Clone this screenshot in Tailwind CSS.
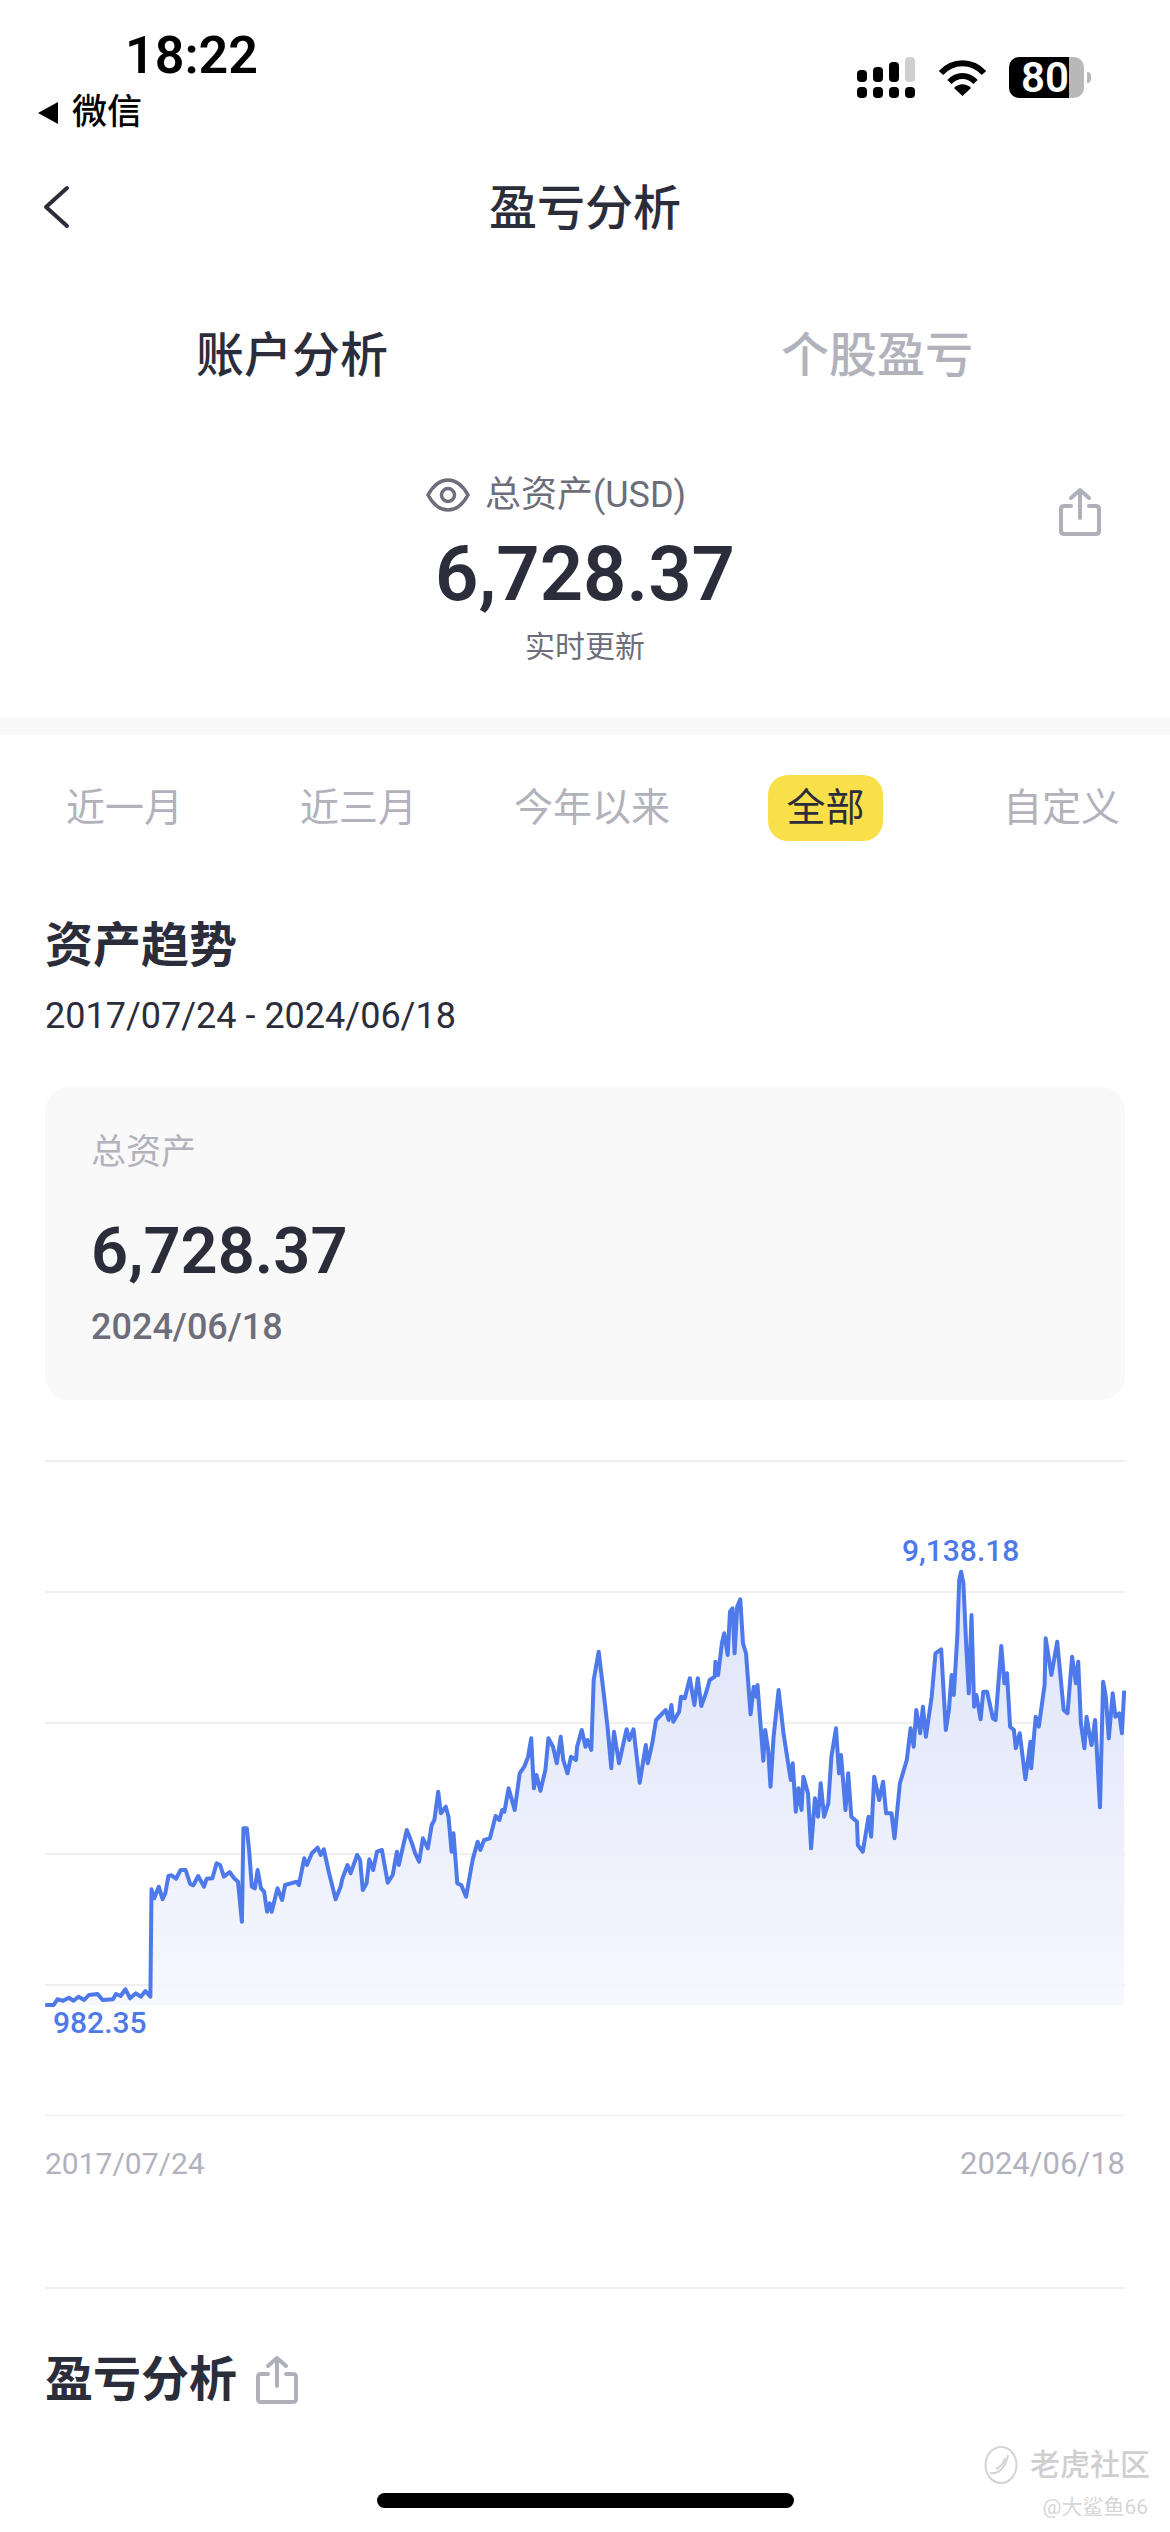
<!DOCTYPE html>
<html lang="zh-CN">
<head>
  <meta charset="UTF-8">
  <meta name="viewport" content="width=device-width, initial-scale=1.0">
  <title>盈亏分析</title>
  <script src="https://cdn.jsdelivr.net/npm/@tailwindcss/browser@4"></script>
</head>
<body class="bg-white text-[#2c2d3a] font-['Roboto','Noto_Sans_CJK_SC',sans-serif]">
<div class="relative w-[1170px] h-[2532px] overflow-hidden">

  <!-- Status bar -->
  <header class="h-[162px] flex justify-between text-black">
    <div class="pl-[37px]">
      <div class="pl-[88px] pt-[26px] h-[88px] text-[52px] leading-[60px] font-semibold">18:22</div>
      <div class="flex items-center gap-[14px] h-[50px] text-[35px] leading-[50px] font-medium">
        <svg width="21" height="24" viewBox="0 0 21 24"><path d="M21 1V23L1 12Z" fill="#000"/></svg>
        <span>微信</span>
      </div>
    </div>
    <div class="flex items-start pr-[79px] pt-[57px]">
      <svg width="131" height="42" viewBox="0 0 131 42">
        <g fill="#000">
          <rect x="0" y="13" width="10" height="12" rx="4"/>
          <rect x="16" y="10" width="10" height="15" rx="4"/>
          <rect x="32" y="5" width="10" height="20" rx="4"/>
          <rect x="0" y="30" width="10" height="11" rx="4"/>
          <rect x="16" y="30" width="10" height="11" rx="4"/>
          <rect x="32" y="30" width="10" height="11" rx="4"/>
          <rect x="48" y="30" width="10" height="11" rx="4"/>
        </g>
        <rect x="48" y="0" width="10" height="25" rx="4" fill="#cfcfcf"/>
        <g fill="none" stroke="#000" stroke-width="6">
          <path d="M84 16C96 3 115 3 127 16"/>
          <path d="M92.500 25C100 17 111 17 118.500 25"/>
        </g>
        <path d="M105.500 39L97 31C102 26 109 26 114 31Z" fill="#000"/>
      </svg>
      <div class="flex items-center ml-[21px]">
        <div class="w-[60px] h-[41px] rounded-l-[10px] bg-black text-white text-[42px] leading-[41px] font-semibold text-right">80</div>
        <div class="w-[15px] h-[41px] rounded-r-[10px] bg-[#b8b8b8]"></div>
        <div class="ml-[3px] w-[4px] h-[11px] rounded-r-full bg-[#b8b8b8]"></div>
      </div>
    </div>
  </header>

  <!-- Nav -->
  <nav class="relative h-[94px] flex items-center justify-center text-[48px] font-medium">
    <svg class="absolute left-[42px] top-[23px]" width="28" height="44" viewBox="0 0 28 44" fill="none" stroke="#2c2d3a" stroke-width="4" stroke-linecap="round" stroke-linejoin="round">
      <path d="M25 3L4 22L25 41"/>
    </svg>
    盈亏分析
  </nav>

  <!-- Tabs -->
  <div class="mt-[50px] h-[100px] flex items-center text-[48px] font-medium">
    <div class="w-[584px] text-center">账户分析</div>
    <div class="w-[586px] text-center text-[#b2b2bc]">个股盈亏</div>
  </div>

  <!-- Total -->
  <section class="relative h-[311px] pt-[64px] text-center">
    <div class="flex items-center justify-center h-[50px] gap-[15px] pr-[58px] text-[36px] text-[#6d6e79]">
      <svg width="44" height="34" viewBox="0 0 44 34" fill="none" stroke="#6d6e79" stroke-width="3.500">
        <path d="M2 17C8 6 15 2 22 2C29 2 36 6 42 17C36 28 29 32 22 32C15 32 8 28 2 17Z"/>
        <circle cx="22" cy="17" r="6.500"/>
      </svg>
      <span>总资产(USD)</span>
    </div>
    <div class="mt-[9px] h-[90px] text-[76px] leading-[90px] font-semibold">6,728.37</div>
    <div class="mt-[8px] h-[40px] text-[30px] leading-[40px] text-[#6d6e79]">实时更新</div>
    <svg class="absolute left-[1058px] top-[81px]" width="44" height="50" viewBox="0 0 44 50" fill="none" stroke="#b0b0bb" stroke-width="4" stroke-linecap="round" stroke-linejoin="round">
      <path d="M22 3V31M13 11L22 3L31 11"/>
      <path d="M13 19H6C4 19 3 20 3 22V44C3 46 4 47 6 47H38C40 47 41 46 41 44V22C41 20 40 19 38 19H31"/>
    </svg>
  </section>
  <div class="h-[18px] bg-[#f9f9f9]"></div>

  <!-- Period -->
  <div class="flex items-center h-[66px] mt-[40px] pl-[66px] text-[39px] text-[#b2b2bc]">
    <span>近一月</span>
    <span class="ml-[117px]">近三月</span>
    <span class="ml-[97px]">今年以来</span>
    <span class="ml-[98px] w-[115px] h-[66px] leading-[66px] text-center rounded-[20px] bg-[#f9e04b] text-[#2c2d3a]">全部</span>
    <span class="ml-[120px]">自定义</span>
  </div>

  <!-- Trend -->
  <main class="px-[45px]">
    <h2 class="mt-[73px] h-[64px] text-[48px] leading-[64px] font-semibold">资产趋势</h2>
    <p class="mt-[15px] h-[46px] text-[36px] leading-[46px]">2017/07/24 - 2024/06/18</p>

    <div class="mt-[48px] h-[313px] pt-[44px] pl-[46px] rounded-[24px] bg-[#f9f9f9]">
      <div class="h-[44px] text-[35px] leading-[44px] text-[#b2b2bc]">总资产</div>
      <div class="mt-[38px] h-[76px] text-[65px] leading-[76px] font-semibold">6,728.37</div>
      <div class="mt-[16px] h-[44px] text-[36px] leading-[44px] font-medium text-[#6d6e79]">2024/06/18</div>
    </div>
  </main>

  <!-- Chart -->
  <section class="relative mt-[60px] h-[656px]">
    <svg class="block" width="1170" height="656" viewBox="0 0 1170 656">
      <defs>
        <linearGradient id="area" x1="0" y1="0" x2="0" y2="1">
          <stop offset="0" stop-color="#d9e0f8"/>
          <stop offset="1" stop-color="#f6f7fe"/>
        </linearGradient>
      </defs>
      <g stroke="#efeff1" stroke-width="2">
        <path d="M45 1H1125"/>
        <path d="M45 132H1125"/>
        <path d="M45 263H1125"/>
        <path d="M45 394H1125"/>
        <path d="M45 525H1125"/>
        <path d="M45 656H1125"/>
      </g>
      <path id="chartArea" fill="url(#area)" fill-opacity="0.9"/>
      <path id="chartLine" fill="none" stroke="#4d79ea" stroke-width="4" stroke-linejoin="round"/>
    </svg>
    <span class="absolute left-[902px] top-[73px] text-[30px] leading-[36px] font-medium text-[#4d79ea]">9,138.18</span>
    <span class="absolute left-[53px] top-[545px] text-[30px] leading-[36px] font-medium text-[#4d79ea]">982.35</span>
  </section>

  <div class="flex justify-between px-[45px] mt-[28px] h-[40px] text-[30px] leading-[40px] text-[#b2b2bc]">
    <span>2017/07/24</span>
    <span class="text-[31px]">2024/06/18</span>
  </div>
  <div class="mx-[45px] mt-[103px] h-[2px] bg-[#efeff1]"></div>

  <!-- Profit section -->
  <div class="flex items-center gap-[18px] px-[45px] mt-[59px] h-[64px]">
    <h2 class="text-[48px] leading-[64px] font-semibold">盈亏分析</h2>
    <svg width="44" height="50" viewBox="0 0 44 50" fill="none" stroke="#b0b0bb" stroke-width="4" stroke-linecap="round" stroke-linejoin="round">
      <path d="M22 3V31M13 11L22 3L31 11"/>
      <path d="M13 19H6C4 19 3 20 3 22V44C3 46 4 47 6 47H38C40 47 41 46 41 44V22C41 20 40 19 38 19H31"/>
    </svg>
  </div>

  <!-- Watermark -->
  <div class="absolute left-[984px] top-[2445px] flex items-center gap-[12px] text-[#cfcfd2]">
    <svg width="34" height="40" viewBox="0 0 34 40" fill="none" stroke="#d4d4d6" stroke-width="2">
      <ellipse cx="17" cy="20" rx="15.500" ry="18"/>
      <path d="M6 28C14 30 22 22 24 10M12 24C16 22 20 18 21 13"/>
    </svg>
    <span class="text-[30px] leading-[40px] font-medium">老虎社区</span>
  </div>
  <div class="absolute right-[22px] top-[2492px] text-[21px] leading-[30px] text-[#d6d6d8]">@大鲨鱼66</div>

  <!-- Home indicator -->
  <div class="absolute left-[377px] top-[2493px] w-[417px] h-[15px] rounded-full bg-black"></div>
</div>

<script>
  // traced off the chart, first part is x/2.613 from 0, second part from 570, y/3 from the svg top offset
  const partA = [[118,1455],[140,1455],[150,1438],[165,1442],[180,1433],[192,1442],[205,1430],[220,1440],[232,1425],[255,1422],[268,1440],[295,1438],[303,1422],[315,1428],[328,1408],[340,1435],[355,1420],[368,1430],[380,1413],[393,1430],[396,1108],[403,1135],[415,1100],[425,1138],[432,1120],[440,1068],[448,1066],[460,1076],[472,1050],[485,1050],[497,1092],[505,1096],[518,1068],[533,1100],[540,1076],[555,1075],[566,1030],[575,1035],[585,1070],[600,1056],[612,1075],[622,1085],[632,1205],[636,925],[645,925],[651,990],[658,1100],[666,1105],[673,1050],[682,1105],[690,1115],[698,1175],[705,1150],[710,1175],[725,1105],[737,1140],[745,1095],[760,1090],[775,1085],[781,1095],[795,1015],[802,1035],[815,1000],[830,983],[838,1005],[846,988],[860,1060],[877,1138],[890,1100],[895,1075],[908,1035],[916,1060],[933,1005],[941,1020],[948,1110],[958,1090],[965,1018],[975,1050],[985,995],[998,990],[1013,1088],[1026,1065],[1037,995],[1042,1035],[1050,995],[1063,930],[1075,965],[1085,1000],[1095,1025],[1105,955],[1118,985],[1128,915],[1135,900],[1145,815],[1152,880],[1165,860],[1172,890],[1180,995],[1185,940],[1195,1090],[1205,1095],[1218,1130],[1235,1020],[1248,965],[1255,990],[1265,960],[1280,955],[1295,888],[1305,900],[1312,870],[1318,875],[1329,805],[1345,870],[1358,760],[1370,740],[1380,710],[1388,655],[1395,805],[1402,765],[1412,812],[1425,750],[1433,655],[1445,680],[1455,730],[1465,650],[1472,720],[1483,760],[1492,710],[1505,720],[1508,680],[1520,630],[1530,680],[1535,660],[1545,690]];
  const partB = [[62,480],[75,395],[88,520],[98,620],[108,745],[115,635],[128,730],[148,628],[155,660],[166,628],[182,788],[198,675],[203,730],[215,670],[225,600],[250,570],[258,600],[265,555],[270,605],[285,575],[290,530],[300,535],[313,475],[325,555],[334,475],[343,558],[355,520],[365,480],[378,470],[380,425],[387,465],[397,370],[403,340],[412,405],[418,275],[425,265],[430,400],[437,260],[445,238],[452,370],[460,400],[472,583],[480,500],[487,530],[490,495],[497,600],[505,722],[510,630],[518,690],[524,800],[532,650],[545,510],[558,640],[570,730],[577,780],[582,730],[590,875],[597,805],[605,870],[610,770],[622,820],[630,985],[640,835],[648,890],[655,790],[664,890],[675,850],[683,710],[695,625],[703,760],[708,705],[720,870],[727,760],[735,890],[750,905],[752,975],[765,995],[780,890],[787,950],[795,770],[808,840],[818,785],[826,880],[840,880],[848,955],[862,790],[880,720],[890,625],[898,680],[905,570],[915,640],[922,560],[930,650],[945,530],[955,400],[970,388],[982,630],[990,570],[997,465],[1003,525],[1012,350],[1017,180],[1022,155],[1028,190],[1035,370],[1042,520],[1049,285],[1056,560],[1062,525],[1073,598],[1080,515],[1090,515],[1105,595],[1112,600],[1127,378],[1135,490],[1142,460],[1150,620],[1160,630],[1165,685],[1175,640],[1180,685],[1190,778],[1203,665],[1205,745],[1217,590],[1225,620],[1240,495],[1243,355],[1258,465],[1273,365],[1290,570],[1300,580],[1312,410],[1322,490],[1328,425],[1335,610],[1344,685],[1350,590],[1357,640],[1363,675],[1372,600],[1385,862],[1393,485],[1400,530],[1408,655],[1418,520],[1425,590],[1435,580],[1442,640],[1448,512]];

  const chartTop = 1460;
  const toSvg = (p, offset) => [(offset + p[0] / 2.613).toFixed(1), (1520 + p[1] / 3 - chartTop).toFixed(1)];
  const pts = partA.map(p => toSvg(p, 0)).concat(partB.map(p => toSvg(p, 570)));
  const line = pts.map((p, i) => (i ? 'L' : 'M') + p[0] + ' ' + p[1]).join('');
  document.getElementById('chartLine').setAttribute('d', line);
  document.getElementById('chartArea').setAttribute('d', line + 'L' + pts[pts.length - 1][0] + ' 545L45 545Z');
</script>
</body>
</html>
